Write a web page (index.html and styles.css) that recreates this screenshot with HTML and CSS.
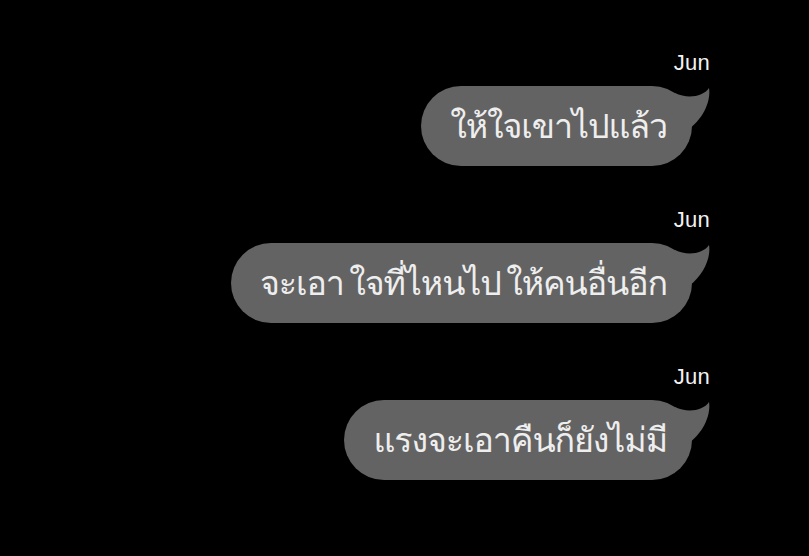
FILE: index.html
```html
<!DOCTYPE html>
<html lang="th">
<head>
<meta charset="utf-8">
<link rel="stylesheet" href="styles.css">
</head>
<body>
<div class="thread">
  <div class="msg">
    <div class="name">Jun</div>
    <div class="bubble">
      <span class="text">ให้ใจเขาไปแล้ว</span>
      <svg class="tail" width="46" height="46" viewBox="0 0 46 46"><path d="M5 30 L8 8 C20 14 36 12 42 3 C44 14 38 32 22 44 Z"/></svg>
    </div>
  </div>
  <div class="msg">
    <div class="name">Jun</div>
    <div class="bubble">
      <span class="text">จะเอา ใจที่ไหนไป ให้คนอื่นอีก</span>
      <svg class="tail" width="46" height="46" viewBox="0 0 46 46"><path d="M5 30 L8 8 C20 14 36 12 42 3 C44 14 38 32 22 44 Z"/></svg>
    </div>
  </div>
  <div class="msg">
    <div class="name">Jun</div>
    <div class="bubble">
      <span class="text">แรงจะเอาคืนก็ยังไม่มี</span>
      <svg class="tail" width="46" height="46" viewBox="0 0 46 46"><path d="M5 30 L8 8 C20 14 36 12 42 3 C44 14 38 32 22 44 Z"/></svg>
    </div>
  </div>
</div>
</body>
</html>
```
FILE: styles.css
```css
html, body {
  margin: 0;
  padding: 0;
  background: #000;
  height: 100%;
}
.thread {
  display: flex;
  flex-direction: column;
  align-items: flex-end;
  padding: 50px 98px 0 0;
  gap: 41px;
}
.msg {
  display: flex;
  flex-direction: column;
  align-items: flex-end;
  gap: 10px;
}
.name {
  font-family: "Liberation Sans", Arial, sans-serif;
  font-size: 22px;
  line-height: 26px;
  color: #f2f2f2;
  margin-right: 1px;
  letter-spacing: 0.3px;
}
.bubble {
  position: relative;
  margin-right: 19px;
  height: 80px;
  box-sizing: border-box;
  padding: 0 25px 0 29px;
  border-radius: 40px;
  background: #636363;
  display: flex;
  align-items: center;
}
.text {
  font-family: "Loma", "Garuda", "Sarabun", "Noto Sans Thai Looped", "Noto Serif Thai", "Noto Sans Thai", sans-serif;
  font-size: 34px;
  letter-spacing: -1.1px;
  word-spacing: -5px;
  color: #eeeeee;
  white-space: nowrap;
}
.tail {
  position: absolute;
  right: -21px;
  top: -1px;
  fill: #636363;
}
```
